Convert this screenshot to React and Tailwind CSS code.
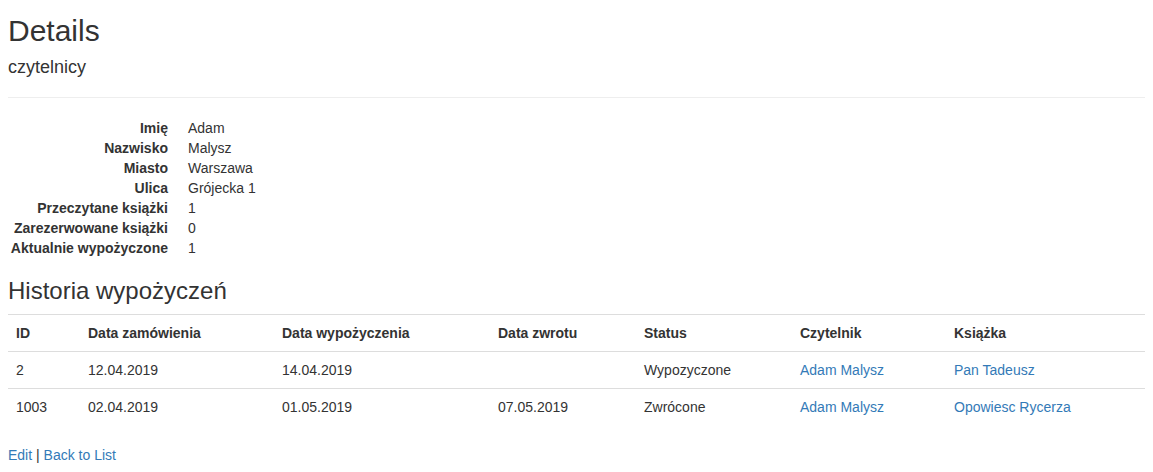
import React from 'react';

const reader = [
  ['Imię', 'Adam'],
  ['Nazwisko', 'Malysz'],
  ['Miasto', 'Warszawa'],
  ['Ulica', 'Grójecka 1'],
  ['Przeczytane książki', '1'],
  ['Zarezerwowane książki', '0'],
  ['Aktualnie wypożyczone', '1'],
];

const history = [
  { id: '2', ordered: '12.04.2019', borrowed: '14.04.2019', returned: '', status: 'Wypozyczone', reader: 'Adam Malysz', book: 'Pan Tadeusz' },
  { id: '1003', ordered: '02.04.2019', borrowed: '01.05.2019', returned: '07.05.2019', status: 'Zwrócone', reader: 'Adam Malysz', book: 'Opowiesc Rycerza' },
];

const cols = [
  ['ID', 'w-[72px]'],
  ['Data zamówienia', 'w-[194px]'],
  ['Data wypożyczenia', 'w-[216px]'],
  ['Data zwrotu', 'w-[146px]'],
  ['Status', 'w-[156px]'],
  ['Czytelnik', 'w-[154px]'],
  ['Książka', ''],
];

const App = () => {
  return (
    <div className="min-h-[472px] bg-white px-2 pt-[14px] text-[14px] leading-[20px] text-[#333] font-['Liberation_Sans',Arial,sans-serif]">
      <h2 className="text-[30px] leading-[33px] font-normal mb-[10px]">Details</h2>

      <div>
        <h4 className="text-[18px] leading-[20px] font-normal mt-[10px]">czytelnicy</h4>
        <hr className="mt-[20px] mb-[20px] border-0 border-t border-[#eee]" />

        <dl className="mb-[20px]">
          {reader.map(([label, value]) => (
            <div key={label} className="flex">
              <dt className="w-[160px] shrink-0 text-right font-bold whitespace-nowrap">{label}</dt>
              <dd className="ml-[20px]">{value}</dd>
            </div>
          ))}
        </dl>
      </div>

      <h3 className="text-[24px] leading-[26px] font-normal mb-[10px]">Historia wypożyczeń</h3>

      <table className="w-full table-fixed border-collapse mb-[20px]">
        <tbody>
          <tr>
            {cols.map(([name, w]) => (
              <th key={name} className={`${w} border-t border-[#ddd] p-[8px] text-left font-bold align-top`}>
                {name}
              </th>
            ))}
          </tr>
          {history.map((row) => (
            <tr key={row.id}>
              <td className="border-t border-[#ddd] p-[8px] align-top">{row.id}</td>
              <td className="border-t border-[#ddd] p-[8px] align-top">{row.ordered}</td>
              <td className="border-t border-[#ddd] p-[8px] align-top">{row.borrowed}</td>
              <td className="border-t border-[#ddd] p-[8px] align-top">{row.returned}</td>
              <td className="border-t border-[#ddd] p-[8px] align-top">{row.status}</td>
              <td className="border-t border-[#ddd] p-[8px] align-top">
                <a href="#" className="text-[#337ab7]">{row.reader}</a>
              </td>
              <td className="border-t border-[#ddd] p-[8px] align-top">
                <a href="#" className="text-[#337ab7]">{row.book}</a>
              </td>
            </tr>
          ))}
        </tbody>
      </table>

      <p>
        <a href="#" className="text-[#337ab7]">Edit</a> |{' '}
        <a href="#" className="text-[#337ab7]">Back to List</a>
      </p>
    </div>
  );
};

export default App;
